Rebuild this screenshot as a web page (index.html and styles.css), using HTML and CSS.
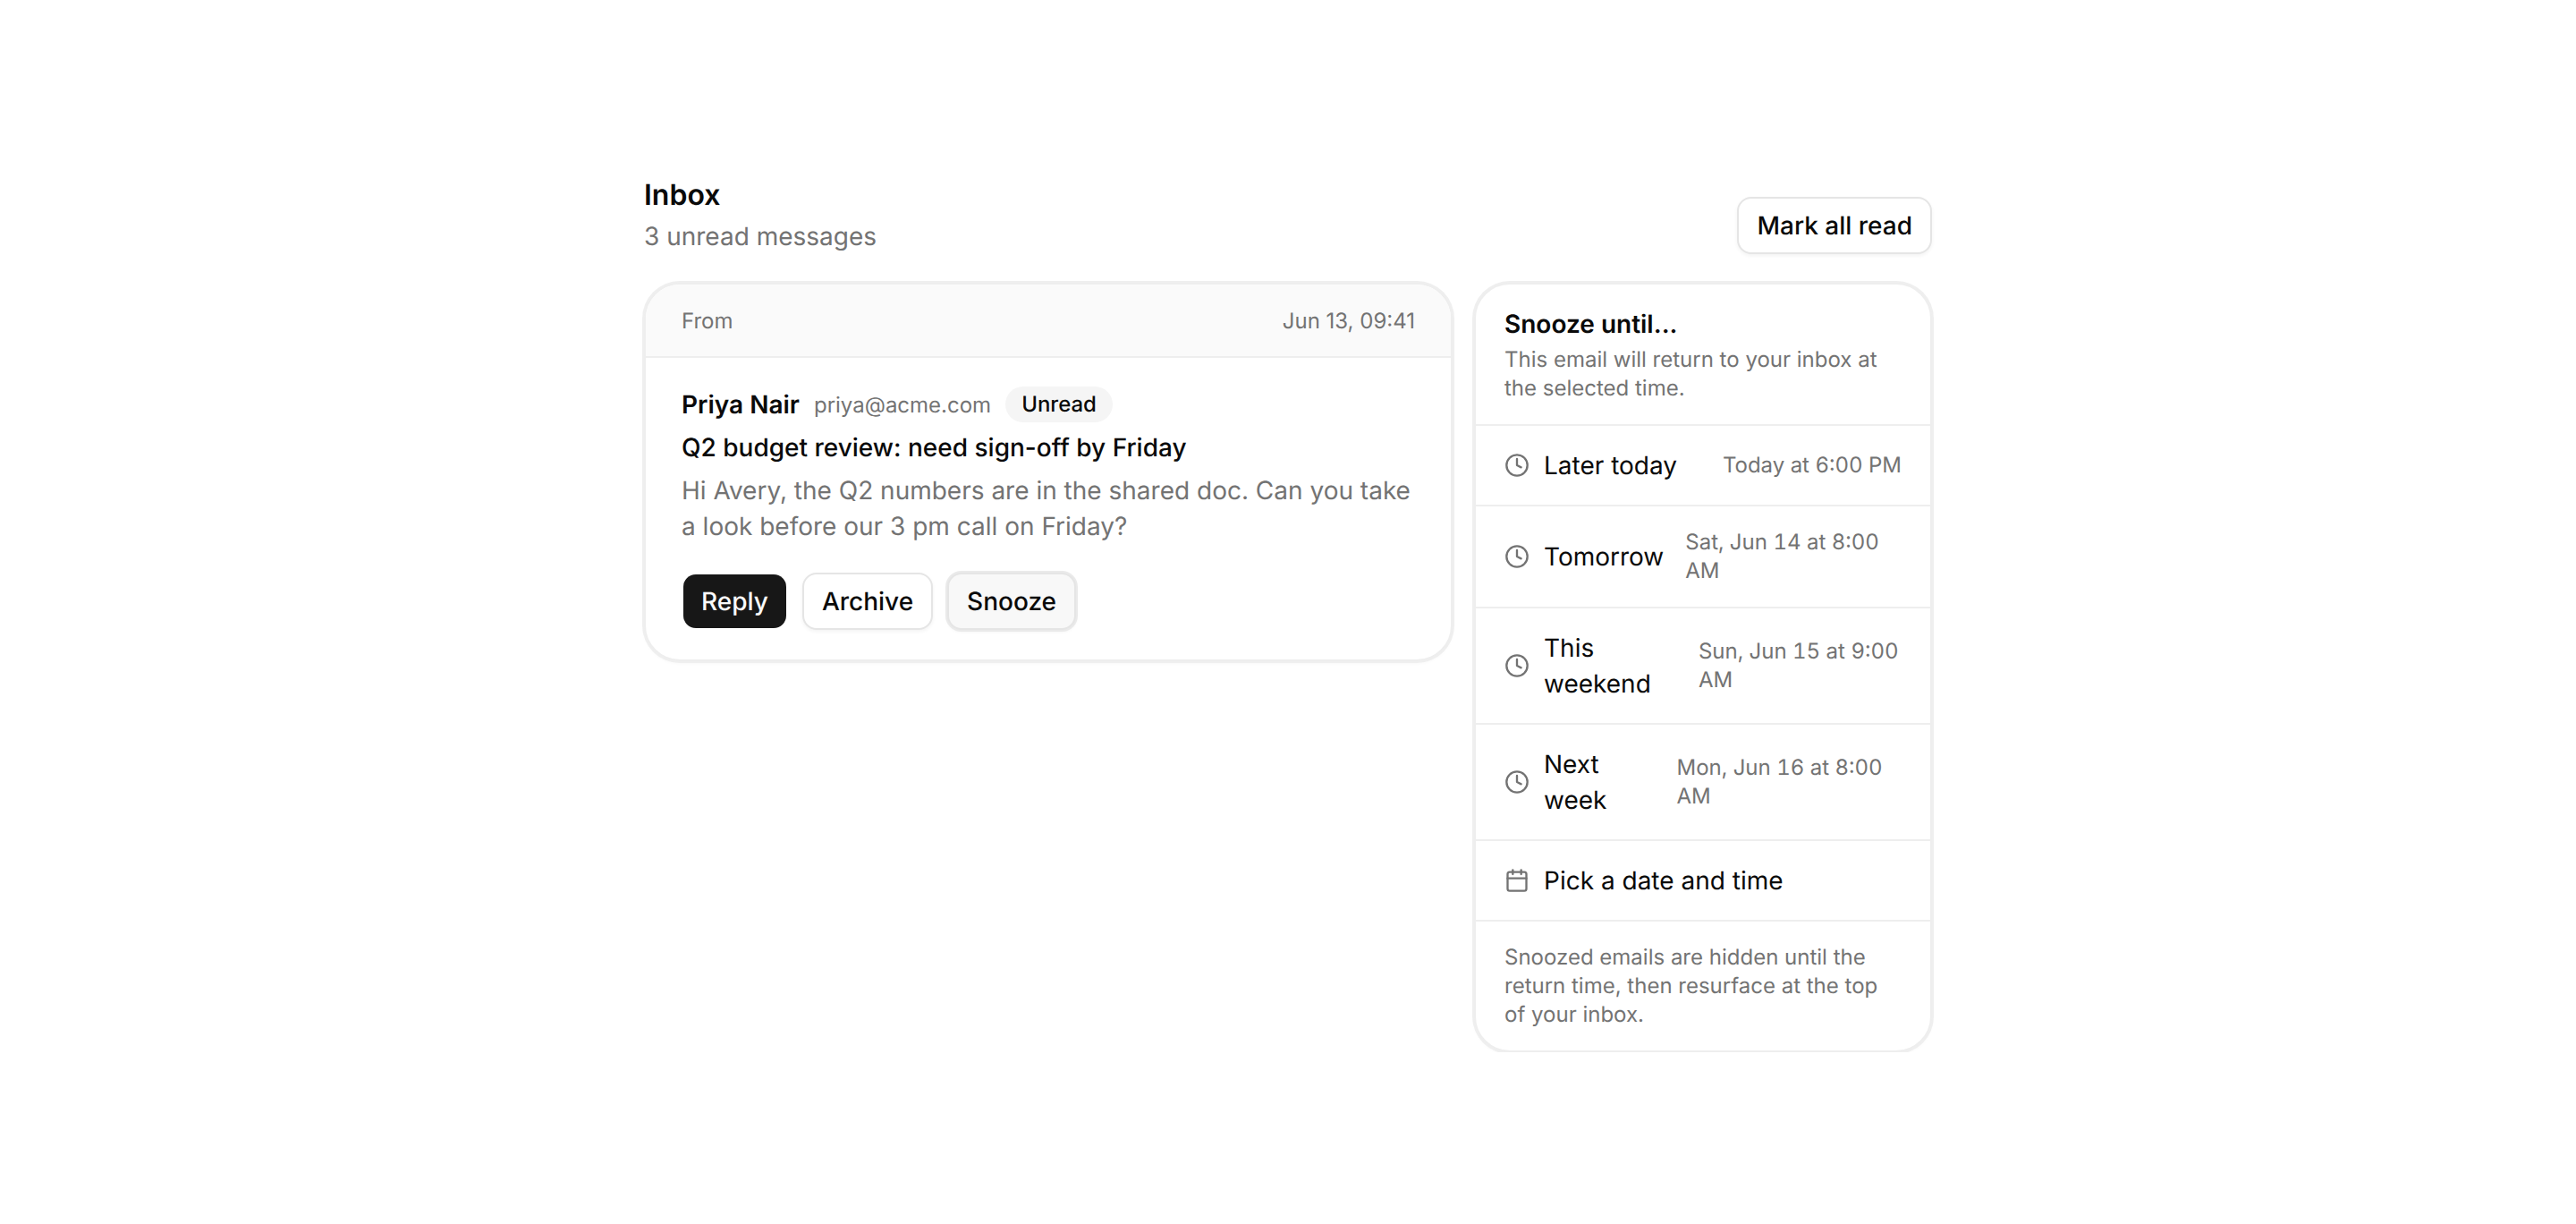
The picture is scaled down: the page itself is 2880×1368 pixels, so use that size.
FILE: index.html
```html
<!DOCTYPE html>
<html lang="en">
<head>
<meta charset="utf-8">
<title>Inbox</title>
<link rel="stylesheet" href="styles.css">
</head>
<body>
<main class="page">
  <header class="top">
    <div>
      <h1 class="title">Inbox</h1>
      <p class="sub">3 unread messages</p>
    </div>
    <button class="btn">Mark all read</button>
  </header>
  <div class="cols">
    <section class="card mail">
      <div class="mail-head"><span>From</span><span>Jun 13, 09:41</span></div>
      <div class="mail-body">
        <div class="sender">
          <span class="name">Priya Nair</span>
          <span class="addr">priya@acme.com</span>
          <span class="badge">Unread</span>
        </div>
        <div class="subject">Q2 budget review: need sign-off by Friday</div>
        <p class="preview">Hi Avery, the Q2 numbers are in the shared doc. Can you take a look before our 3 pm call on Friday?</p>
        <div class="actions">
          <button class="btn btn-dark">Reply</button>
          <button class="btn">Archive</button>
          <button class="btn btn-active">Snooze</button>
        </div>
      </div>
    </section>
    <aside class="card snooze">
      <div class="sn-head">
        <div class="sn-title">Snooze until...</div>
        <p class="sn-desc">This email will return to your inbox at the selected time.</p>
      </div>
      <div class="opt">
        <div class="opt-left">
          <svg class="ico" viewBox="0 0 24 24"><circle cx="12" cy="12" r="10"/><path d="M12 6v6l4 2"/></svg>
          <span class="opt-label">Later today</span>
        </div>
        <span class="opt-time">Today at 6:00 PM</span>
      </div>
      <div class="opt">
        <div class="opt-left">
          <svg class="ico" viewBox="0 0 24 24"><circle cx="12" cy="12" r="10"/><path d="M12 6v6l4 2"/></svg>
          <span class="opt-label">Tomorrow</span>
        </div>
        <span class="opt-time">Sat, Jun 14 at 8:00 AM</span>
      </div>
      <div class="opt">
        <div class="opt-left">
          <svg class="ico" viewBox="0 0 24 24"><circle cx="12" cy="12" r="10"/><path d="M12 6v6l4 2"/></svg>
          <span class="opt-label">This weekend</span>
        </div>
        <span class="opt-time">Sun, Jun 15 at 9:00 AM</span>
      </div>
      <div class="opt">
        <div class="opt-left">
          <svg class="ico" viewBox="0 0 24 24"><circle cx="12" cy="12" r="10"/><path d="M12 6v6l4 2"/></svg>
          <span class="opt-label">Next week</span>
        </div>
        <span class="opt-time">Mon, Jun 16 at 8:00 AM</span>
      </div>
      <div class="opt">
        <div class="opt-left">
          <svg class="ico" viewBox="0 0 24 24"><path d="M8 2v4M16 2v4"/><rect x="3" y="4" width="18" height="18" rx="2"/><path d="M3 10h18"/></svg>
          <span class="opt-label">Pick a date and time</span>
        </div>
      </div>
      <p class="sn-foot">Snoozed emails are hidden until the return time, then resurface at the top of your inbox.</p>
    </aside>
  </div>
</main>
</body>
</html>
```
FILE: styles.css
```css
* { box-sizing: border-box; }
html, body { margin: 0; background: #fff; }
body { font-family: Inter, "Liberation Sans", sans-serif; color: #0a0a0a; text-rendering: geometricPrecision; }
.page { width: 1440px; margin: 0 auto; padding-top: 196px; }
.top { display: flex; justify-content: space-between; align-items: flex-end; margin-bottom: 32px; }
.title { margin: 0 0 4px; font-size: 32px; line-height: 44px; font-weight: 600; }
.sub { margin: 0; font-size: 28px; line-height: 40px; color: #737373; }
.btn { font: 500 28px/40px Inter, sans-serif; text-rendering: geometricPrecision; color: #0a0a0a; background: #fff; border: 2px solid #e5e5e5; border-radius: 16px; padding: 0 20px; box-shadow: 0 2px 4px rgba(0,0,0,.05); height: 64px; }
.btn-dark { background: #171717; background-clip: padding-box; border-color: transparent; color: #fafafa; box-shadow: none; }
.btn-active { background: #f8f8f8; box-shadow: 0 0 0 2px #eaeaea, 0 2px 4px rgba(0,0,0,.05); }
.cols { display: flex; align-items: flex-start; gap: 24px; }
.card { background: #fff; border: 2px solid #eee; border-radius: 40px; overflow: hidden; box-shadow: 0 0 0 2px #efefef, 0 2px 4px rgba(0,0,0,.04); }
.mail { flex: 1; min-width: 0; }
.snooze { width: 512px; flex: none; }
.mail-head { display: flex; justify-content: space-between; align-items: center; height: 82px; padding: 0 40px; background: #fafafa; border-bottom: 2px solid #eee; font-size: 24px; color: #737373; }
.mail-body { padding: 32px 40px 33px; }
.sender { display: flex; align-items: center; gap: 16px; }
.name { font-size: 28px; font-weight: 600; line-height: 40px; }
.addr { font-size: 24px; color: #737373; }
.badge { font-size: 24px; font-weight: 500; background: #f5f5f5; border-radius: 20px; padding: 2px 18px; line-height: 36px; }
.subject { font-size: 28px; font-weight: 500; line-height: 40px; margin-top: 8px; }
.preview { margin: 8px 0 0; font-size: 28px; line-height: 40px; color: #737373; }
.actions { display: flex; gap: 16px; margin-top: 32px; }
.sn-head { padding: 24px 32px; border-bottom: 2px solid #eee; }
.sn-title { font-size: 28px; font-weight: 600; line-height: 40px; }
.sn-desc { margin: 4px 0 0; font-size: 24px; line-height: 32px; color: #737373; }
.opt { display: flex; align-items: center; justify-content: space-between; gap: 24px; padding: 24px 32px; border-bottom: 2px solid #eee; }
.opt-left { display: flex; align-items: center; gap: 16px; }
.ico { width: 28px; height: 28px; flex: none; fill: none; stroke: #737373; stroke-width: 2; stroke-linecap: round; stroke-linejoin: round; }
.opt-label { font-size: 28px; line-height: 40px; }
.opt-time { font-size: 24px; line-height: 32px; color: #737373; font-variant-numeric: tabular-nums; }
.sn-foot { margin: 0; padding: 24px 32px; font-size: 24px; line-height: 32px; color: #737373; }
```
